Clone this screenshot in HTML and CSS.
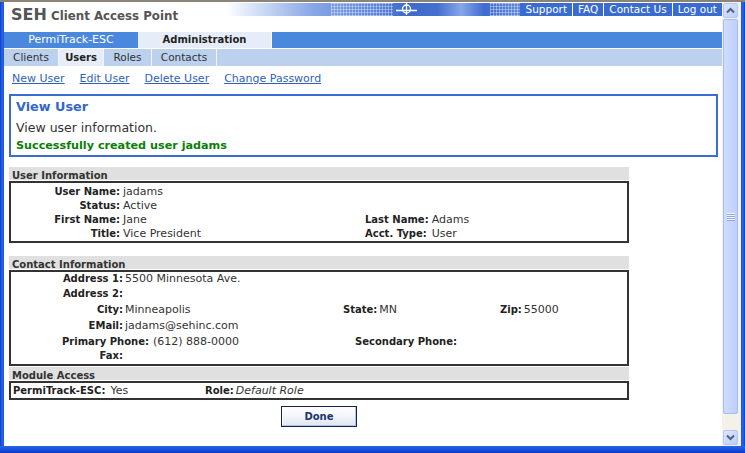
FILE: index.html
```html
<!DOCTYPE html>
<html>
<head>
<meta charset="utf-8">
<title>SEH Client Access Point</title>
<link rel="stylesheet" href="styles.css">
</head>
<body>
<div class="window">
  <div class="frame-top"></div>
  <div class="frame-mid">
    <div class="frame-left"></div>
    <div class="page">
      <div class="header">
        <div class="logo"><span class="seh">SEH</span> <span class="cap">Client Access Point</span></div>
        <div class="top-right">
          <svg class="banner" width="294" height="13" viewBox="0 0 294 13">
            <defs>
              <linearGradient id="bg" x1="0" x2="1" y1="0" y2="0">
                <stop offset="0" stop-color="#ffffff"/>
                <stop offset="0.1" stop-color="#d5e0f6"/>
                <stop offset="0.3" stop-color="#86a6e6"/>
                <stop offset="0.5" stop-color="#5a84da"/>
                <stop offset="0.62" stop-color="#3d69cc"/>
                <stop offset="0.72" stop-color="#4470cf"/>
                <stop offset="0.8" stop-color="#86a6e8"/>
                <stop offset="0.88" stop-color="#3f6bcf"/>
                <stop offset="1" stop-color="#5f86d9"/>
              </linearGradient>
              <pattern id="grid" width="3" height="3" patternUnits="userSpaceOnUse">
                <path d="M0 0.5H3M0.5 0V3" stroke="#ffffff" stroke-opacity="0.35" stroke-width="1"/>
              </pattern>
            </defs>
            <rect width="294" height="13" fill="url(#bg)"/>
            <rect x="105" width="62" height="13" fill="url(#grid)"/>
            <rect x="264" width="30" height="13" fill="url(#grid)"/>
            <circle cx="180.5" cy="6" r="4" fill="none" stroke="#ffffff" stroke-width="1.3"/>
            <path d="M170 7.5H191M180.5 0V12" stroke="#ffffff" stroke-width="1.3"/>
          </svg>
          <div class="toplinks">
            <a href="#">Support</a><a href="#">FAQ</a><a href="#">Contact Us</a><a href="#">Log out</a>
          </div>
        </div>
      </div>

      <div class="tabs1">
        <div class="tab1">PermiTrack-ESC</div>
        <div class="tab1 active">Administration</div>
      </div>
      <div class="tabs2">
        <div class="tab2 t-clients">Clients</div>
        <div class="tab2 t-users active">Users</div>
        <div class="tab2 t-roles">Roles</div>
        <div class="tab2 t-contacts">Contacts</div>
      </div>

      <div class="subnav">
        <a href="#">New User</a>
        <a href="#">Edit User</a>
        <a href="#">Delete User</a>
        <a href="#">Change Password</a>
      </div>

      <div class="content">
        <div class="viewbox">
          <h1 class="vb-title">View User</h1>
          <p class="vb-desc">View user information.</p>
          <p class="vb-success">Successfully created user jadams</p>
        </div>

        <div class="section sec-user">
          <div class="sec-bar">User Information</div>
          <div class="sec-box user-grid">
            <span class="lbl">User Name:</span><span class="val">jadams</span><span></span><span></span>
            <span class="lbl">Status:</span><span class="val">Active</span><span></span><span></span>
            <span class="lbl">First Name:</span><span class="val">Jane</span><span class="lbl2">Last Name:</span><span class="val">Adams</span>
            <span class="lbl">Title:</span><span class="val">Vice President</span><span class="lbl2">Acct. Type:</span><span class="val">User</span>
          </div>
        </div>

        <div class="section sec-contact">
          <div class="sec-bar">Contact Information</div>
          <div class="sec-box contact">
            <div class="crow h15"><span class="clbl">Address 1:</span><span class="cval">5500 Minnesota Ave.</span></div>
            <div class="crow h16"><span class="clbl">Address 2:</span><span class="cval"></span></div>
            <div class="crow h16">
              <div class="grp g-city"><span class="clbl">City:</span><span class="cval">Minneapolis</span></div>
              <div class="grp g-state"><span class="blbl">State:</span><span class="cval">MN</span></div>
              <div class="grp"><span class="blbl">Zip:</span><span class="cval">55000</span></div>
            </div>
            <div class="crow h16"><span class="clbl">EMail:</span><span class="cval">jadams@sehinc.com</span></div>
            <div class="crow h14">
              <div class="grp g-phone"><span class="clbl">Primary Phone:</span><span class="cval wide">(612) 888-0000</span></div>
              <div class="grp"><span class="blbl">Secondary Phone:</span></div>
            </div>
            <div class="crow h15"><span class="clbl">Fax:</span><span class="cval"></span></div>
          </div>
        </div>

        <div class="section sec-module">
          <div class="sec-bar">Module Access</div>
          <div class="sec-box module">
            <div class="grp g-mod"><span class="blbl">PermiTrack-ESC:</span><span class="mval">Yes</span></div>
            <div class="grp"><span class="blbl">Role:</span><span class="mval role">Default Role</span></div>
          </div>
          <div class="actions"><button class="btn-done" type="button">Done</button></div>
        </div>
      </div>
    </div>
    <div class="scrollbar">
      <div class="sb-btn"><svg width="9" height="7" viewBox="0 0 9 7"><path d="M1 5.5L4.5 2L8 5.5" fill="none" stroke="#4d6185" stroke-width="2"/></svg></div>
      <div class="sb-thumb"><svg width="8" height="8" viewBox="0 0 8 8"><path d="M0 0.5H8M0 2.5H8M0 4.5H8M0 6.5H8" stroke="#f4f7ff" stroke-width="1"/><path d="M0 1.5H8M0 3.5H8M0 5.5H8M0 7.5H8" stroke="#8ea7e2" stroke-width="1"/></svg></div>
      <div class="sb-btn sb-down"><svg width="9" height="7" viewBox="0 0 9 7"><path d="M1 1.5L4.5 5L8 1.5" fill="none" stroke="#4d6185" stroke-width="2"/></svg></div>
    </div>
    <div class="frame-right"></div>
  </div>
  <div class="frame-bottom"></div>
</div>
</body>
</html>
```

FILE: styles.css
```css
html, body {
  margin: 0;
  padding: 0;
}
body {
  width: 745px;
  height: 453px;
  overflow: hidden;
  font-family: "DejaVu Sans", Verdana, sans-serif;
  color: #333;
  background: #fff;
}
.window {
  display: flex;
  flex-direction: column;
  height: 453px;
}
.frame-top {
  flex: none;
  height: 2px;
  background: #8a8577;
}
.frame-mid {
  flex: none;
  display: flex;
  height: 444px;
}
.frame-left {
  flex: none;
  width: 4px;
  background: linear-gradient(90deg, #0b3ccf, #2c66e3 55%, #1653dd);
}
.frame-right {
  flex: none;
  width: 4px;
  background: linear-gradient(90deg, #1653dd, #2c66e3 45%, #0b3ccf);
}
.frame-bottom {
  flex: none;
  height: 7px;
  background: linear-gradient(#2c66e3, #1652dc 45%, #0a37c9);
}
.page {
  flex: none;
  width: 718px;
  background: #fff;
  display: flex;
  flex-direction: column;
  overflow: hidden;
}

/* header */
.header {
  flex: none;
  height: 30px;
  display: flex;
  align-items: flex-start;
}
.logo {
  padding: 5px 0 0 7px;
  color: #555;
  font-weight: bold;
  font-size: 12px;
  line-height: 16px;
  white-space: nowrap;
}
.logo .seh {
  font-size: 16px;
}
.logo .cap {
  font-size: 11.8px;
}
.top-right {
  margin-left: auto;
  margin-top: 1px;
  display: flex;
}
.banner {
  display: block;
}
.toplinks {
  display: flex;
  height: 13px;
  background: #3a6bd0;
}
.toplinks a {
  color: #fff;
  text-decoration: none;
  font-size: 10.5px;
  line-height: 12px;
  padding: 0 5px;
  border-left: 1px solid #fff;
  white-space: nowrap;
}
.toplinks a:first-child {
  border-left: none;
}

/* tabs */
.tabs1 {
  flex: none;
  display: flex;
  height: 16px;
  background: #4a88dd;
}
.tab1 {
  width: 134px;
  text-align: center;
  font-size: 11px;
  line-height: 16px;
  color: #fff;
  white-space: nowrap;
}
.tab1.active {
  width: 133px;
  background: #e6edf8;
  color: #222;
  font-weight: bold;
  font-size: 10px;
  border-right: 1px solid #fff;
}
.tabs2 {
  flex: none;
  display: flex;
  height: 17px;
  margin-top: 1px;
  background: #bcd1ee;
}
.tab2 {
  text-align: center;
  font-size: 10.5px;
  line-height: 17px;
  color: #333;
  border-right: 1px solid #f2f6fc;
  white-space: nowrap;
}
.tab2.active {
  background: #e6edf8;
  font-weight: bold;
  font-size: 10px;
  color: #222;
}
.t-clients { width: 54px; }
.t-users { width: 44px; }
.t-roles { width: 47px; }
.t-contacts { width: 64px; }

/* sub navigation */
.subnav {
  flex: none;
  display: flex;
  gap: 15px;
  padding: 6px 0 0 8px;
  height: 13px;
  font-size: 11px;
  line-height: 13px;
}
.subnav a {
  color: #2f5fbf;
  text-decoration: underline;
  white-space: nowrap;
}

/* content */
.content {
  padding: 9px 0 0 5px;
}
.viewbox {
  box-sizing: border-box;
  width: 709px;
  border: 2px solid #3a6bd6;
  padding: 3px 5px 2px;
}
.vb-title {
  margin: 0 0 4px;
  font-size: 12.8px;
  line-height: 16px;
  font-weight: bold;
  color: #3366cc;
}
.vb-desc {
  margin: 0 0 3px;
  font-size: 12.5px;
  line-height: 17px;
  color: #333;
}
.vb-success {
  margin: 0;
  font-size: 11.2px;
  line-height: 14px;
  font-weight: bold;
  color: #0a800a;
}

.section {
  width: 620px;
}
.sec-user { margin-top: 10px; }
.sec-contact { margin-top: 13px; }
.sec-module { margin-top: 1px; }

.sec-bar {
  box-sizing: border-box;
  height: 13px;
  padding: 3px 0 0 3px;
  background: #e0e0e0;
  font-size: 10px;
  line-height: 11px;
  font-weight: bold;
  color: #333;
}
.sec-box {
  box-sizing: border-box;
  margin-top: 1px;
  border: 2px solid #333;
}

.user-grid {
  display: grid;
  grid-template-columns: 109px 239px auto 1fr;
  grid-auto-rows: 14px;
  column-gap: 3px;
  padding-top: 2px;
  align-items: baseline;
}
.lbl, .lbl2, .clbl, .blbl {
  font-size: 10px;
  line-height: 14px;
  font-weight: bold;
  color: #222;
  white-space: nowrap;
}
.lbl {
  text-align: right;
}
.lbl2 {
  text-align: left;
}
.val, .cval, .mval {
  font-size: 11px;
  line-height: 14px;
  color: #333;
  white-space: nowrap;
}

.contact {
  padding-left: 51px;
}
.crow {
  display: flex;
  align-items: baseline;
}
.h14 { height: 14px; }
.h15 { height: 15px; }
.h16 { height: 16px; }
.h17 { height: 17px; }
.clbl {
  min-width: 61px;
  text-align: right;
}
.cval {
  margin-left: 2px;
}
.cval.wide {
  margin-left: 4px;
}
.grp {
  display: flex;
  align-items: baseline;
  flex: none;
}
.g-city { width: 281px; }
.g-state { width: 157px; }
.g-phone { width: 293px; }

.module {
  display: flex;
  align-items: baseline;
  height: 19px;
  padding-left: 2px;
  line-height: 15px;
}
.module .blbl, .module .mval {
  line-height: 15px;
}
.g-mod { width: 192px; }
.module .mval {
  margin-left: 5px;
}
.module .mval.role {
  margin-left: 2px;
  font-style: italic;
}

.actions {
  display: flex;
  justify-content: center;
  margin-top: 6px;
}
.btn-done {
  width: 76px;
  height: 21px;
  margin: 0;
  padding: 0;
  border: 1px solid #13214f;
  border-radius: 0;
  background: linear-gradient(#ffffff, #f3f5fa 50%, #dde4f1);
  box-shadow: inset -1px -1px 0 #b4c4e6, inset 1px 1px 0 #ffffff;
  font-family: "DejaVu Sans", Verdana, sans-serif;
  font-size: 10px;
  font-weight: bold;
  color: #1c346f;
}

/* scrollbar */
.scrollbar {
  flex: none;
  width: 19px;
  background: #f3f1e8;
  display: flex;
  flex-direction: column;
}
.sb-btn {
  box-sizing: border-box;
  width: 15px;
  height: 15px;
  margin: 1px 0 0 1px;
  border: 1px solid #b3c6f4;
  border-radius: 2px;
  background: linear-gradient(135deg, #dbe5fe, #bccffb);
  display: flex;
  align-items: center;
  justify-content: center;
}
.sb-btn svg {
  display: block;
}
.sb-down {
  margin-top: auto;
  margin-bottom: 1px;
}
.sb-thumb {
  box-sizing: border-box;
  width: 15px;
  height: 395px;
  margin: 1px 0 0 1px;
  border: 1px solid #a7bcf0;
  border-radius: 2px;
  background: linear-gradient(90deg, #cfdcfd, #bdcffb);
  display: flex;
  align-items: center;
  justify-content: center;
}
.sb-thumb svg {
  display: block;
}
```
